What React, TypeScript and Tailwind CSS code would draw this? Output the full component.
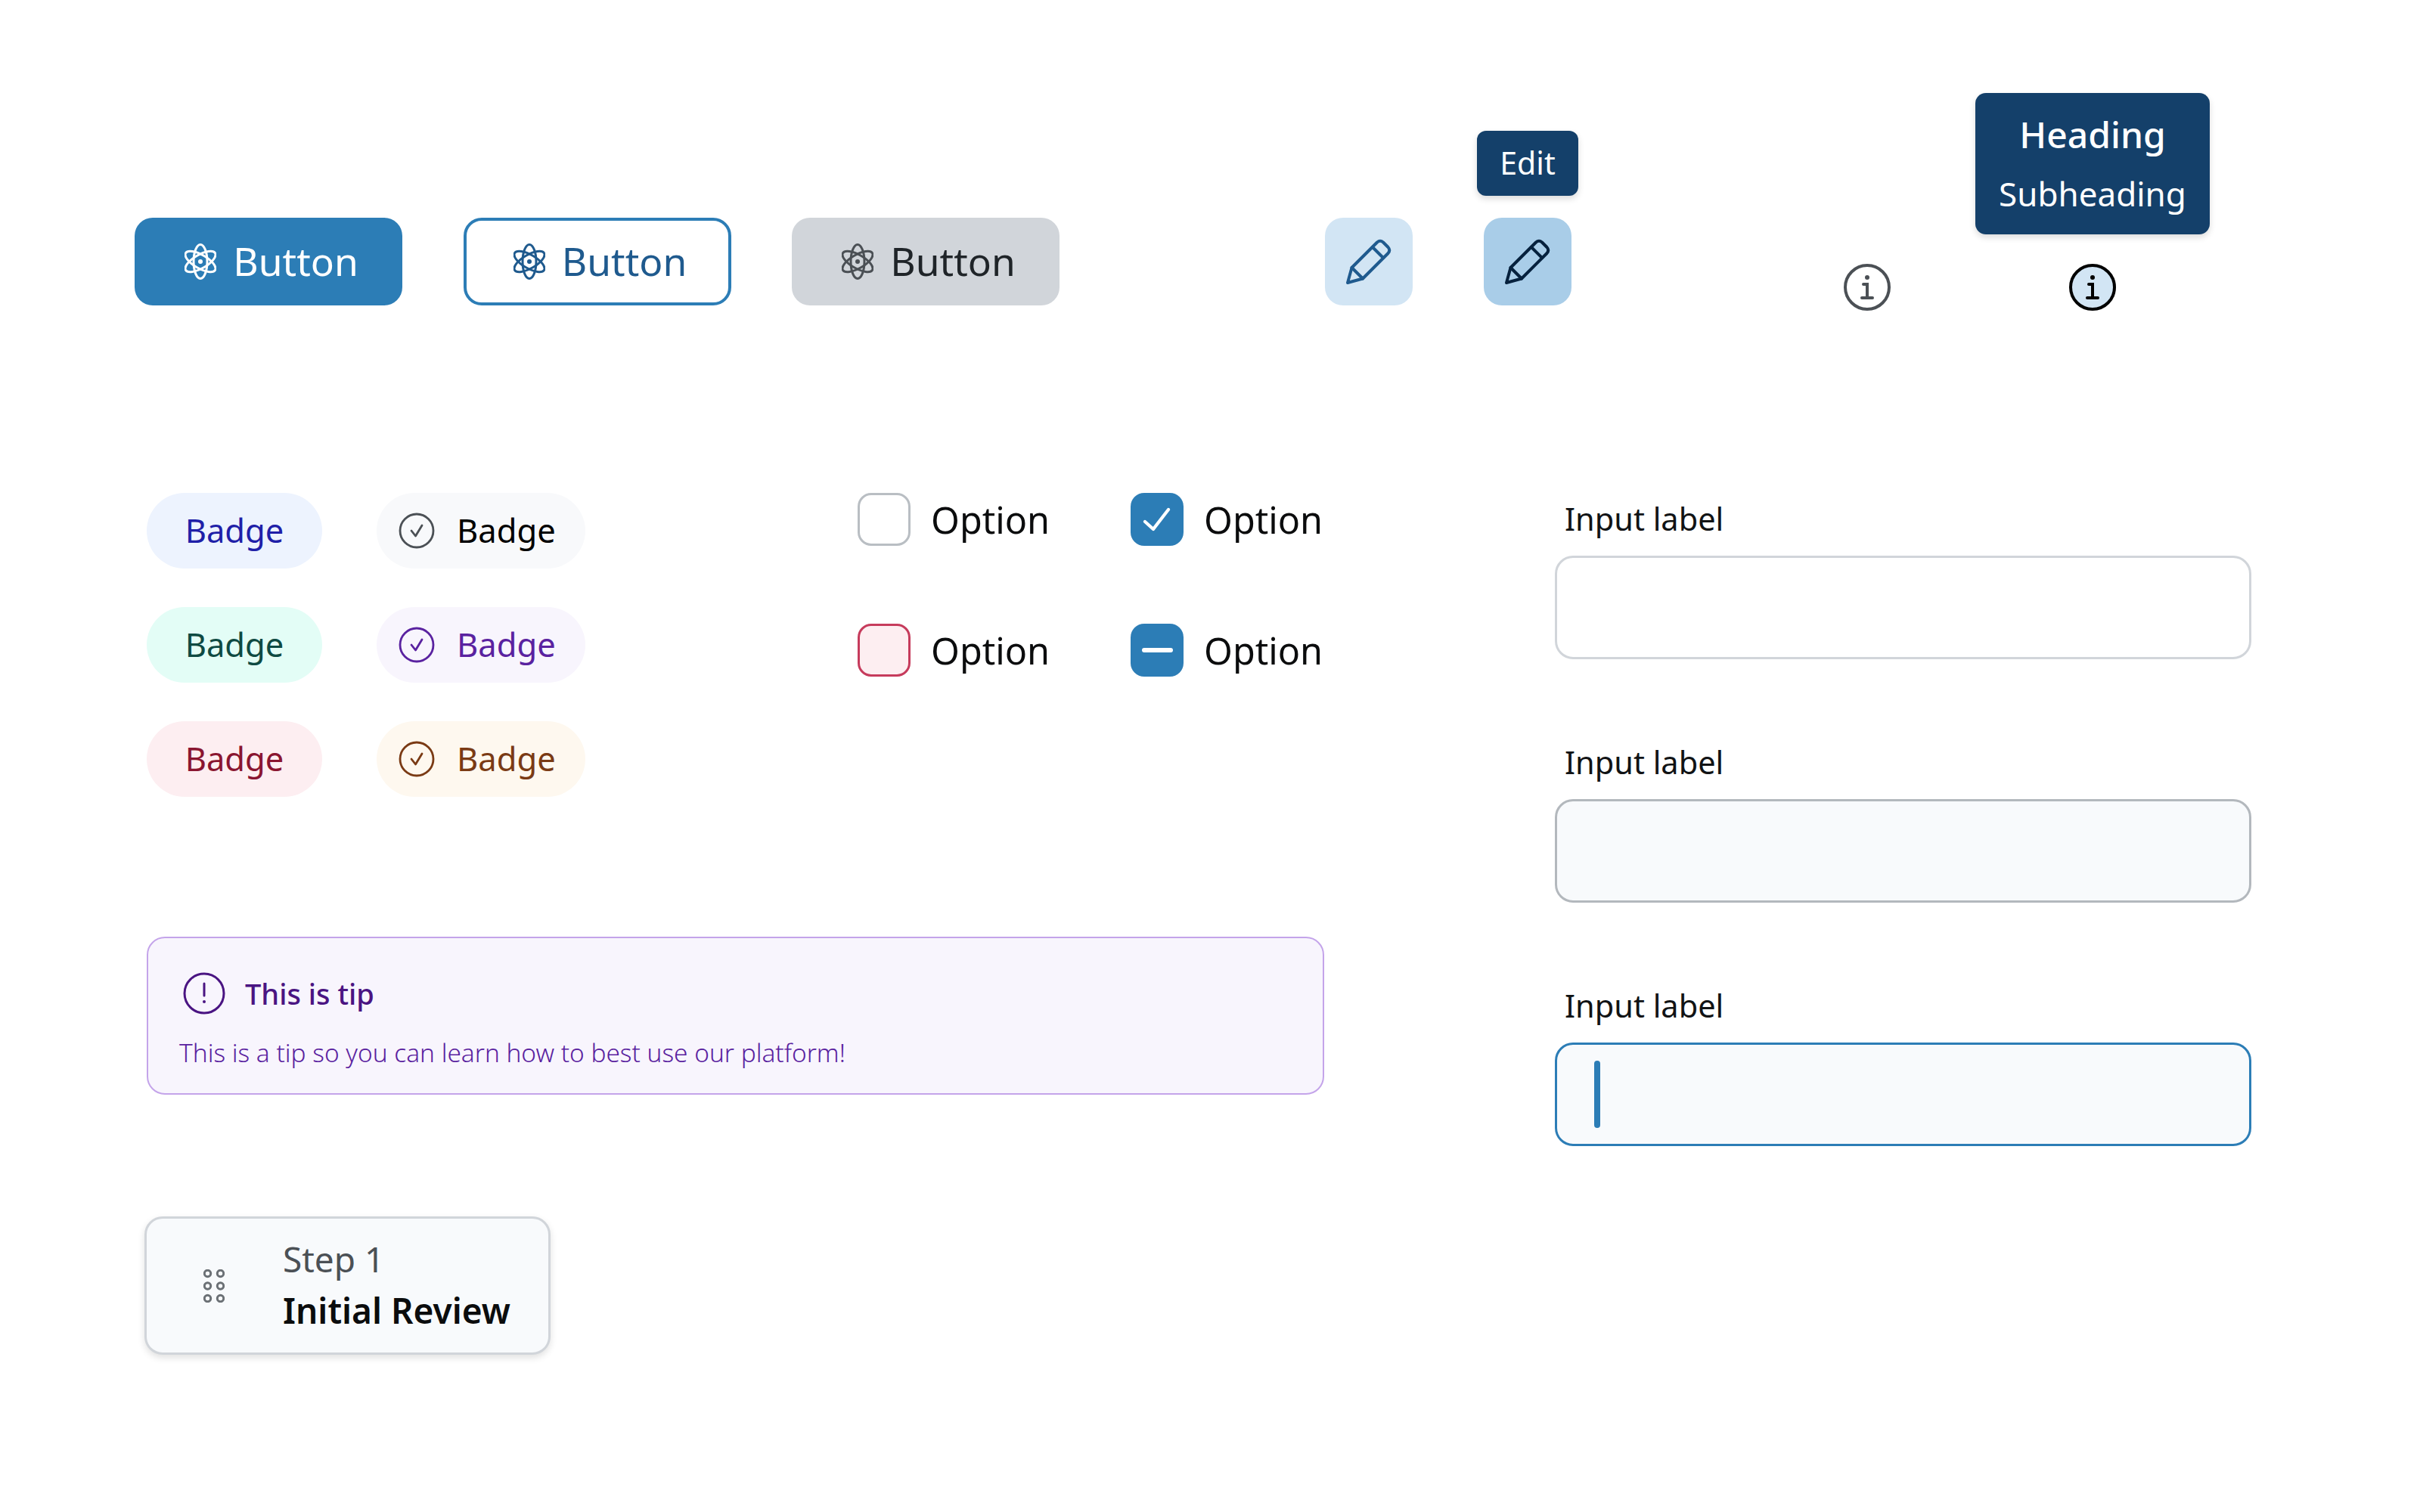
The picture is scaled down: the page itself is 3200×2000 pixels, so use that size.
import React from 'react';

const AtomIcon: React.FC<{ className: string }> = ({ className }) => (
  <svg viewBox="0 0 42 48" className={`w-[42px] h-[48px] shrink-0 ${className}`} fill="none" stroke="currentColor" strokeWidth="3">
    <ellipse cx="21" cy="24" rx="9" ry="22.5" />
    <ellipse cx="21" cy="24" rx="9" ry="22.5" transform="rotate(60 21 24)" />
    <ellipse cx="21" cy="24" rx="9" ry="22.5" transform="rotate(-60 21 24)" />
    <circle cx="21" cy="24" r="3" fill="currentColor" stroke="none" />
  </svg>
);

const PencilIcon: React.FC<{ className: string }> = ({ className }) => (
  <svg viewBox="0 0 60 60" className={`w-[60px] h-[60px] ${className}`} fill="none" stroke="currentColor" strokeWidth="4" strokeLinejoin="round" strokeLinecap="round">
    <path d="M2 58 L7.5 38 L41 4.5 Q45 1 49 4.5 L55.5 11 Q59 15 55.5 19 L22 52.5 Z" />
    <path d="M7.5 38 L22 52.5" />
    <path d="M35 11 L49 25" />
  </svg>
);

const InfoIcon: React.FC<{ className: string }> = ({ className }) => (
  <svg viewBox="0 0 62 62" className={`w-[62px] h-[62px] ${className}`} fill="none" stroke="currentColor" strokeWidth="4" strokeLinecap="round">
    <circle cx="31" cy="31" r="29" fill="var(--fill)" />
    <circle cx="31" cy="18" r="3" fill="currentColor" stroke="none" />
    <path d="M26 27 H31 V45" />
    <path d="M24 45 H38" />
  </svg>
);

const CheckRing: React.FC<{ className: string }> = ({ className }) => (
  <svg viewBox="0 0 48 48" className={`w-[48px] h-[48px] shrink-0 ${className}`} fill="none" stroke="currentColor" strokeWidth="2.8" strokeLinecap="round" strokeLinejoin="round">
    <circle cx="24" cy="24" r="22" />
    <path d="M17 24 L22.5 31 L31 17" />
  </svg>
);

const Btn: React.FC<{ box: string; icon: string }> = ({ box, icon }) => (
  <button className={`w-[354px] h-[116px] mb-[7px] pl-[8px] rounded-[24px] flex items-center justify-center gap-[22px] text-[51.5px] leading-none ${box}`}>
    <AtomIcon className={icon} />
    <span>Button</span>
  </button>
);

const Badge: React.FC<{ box: string; icon?: string }> = ({ box, icon }) => (
  <div className={`h-[100px] pb-[1px] rounded-full flex items-center text-[43.5px] ${icon ? 'pl-[29px] gap-[29px]' : 'justify-center'} ${box}`}>
    {icon && <CheckRing className={icon} />}
    <span>Badge</span>
  </div>
);

const Check: React.FC<{ box: string; children?: React.ReactNode }> = ({ box, children }) => (
  <div className="flex items-center gap-[27px] h-[70px] text-[48.5px] text-[#0b0c0d]">
    <div className={`w-[70px] h-[70px] rounded-[18px] flex items-center justify-center ${box}`}>{children}</div>
    <span>Option</span>
  </div>
);

const Field: React.FC<{ box: string; children?: React.ReactNode }> = ({ box, children }) => (
  <div className="flex flex-col">
    <label className="pl-[13px] h-[77px] text-[41.5px] leading-[56px] text-[#111315]">Input label</label>
    <div className={`w-[921px] h-[137px] rounded-[24px] flex items-center pl-[49px] ${box}`}>{children}</div>
  </div>
);

export default function App() {
  return (
    <div className="w-[3200px] h-[2000px] bg-white pt-[123px] font-['Noto_Sans',sans-serif] overflow-hidden">
      <div className="flex items-end pl-[178px] h-[288px]">
        <div className="flex gap-[80.5px]">
          <Btn box="bg-[#2c7db6] text-white" icon="text-white" />
          <Btn box="bg-white border-[4px] border-[#2c7db6] text-[#1f5a8e]" icon="text-[#1f5a8e]" />
          <Btn box="bg-[#d1d5da] text-[#1f2428]" icon="text-[#4b5055]" />
        </div>
        <button className="ml-[351px] mb-[7px] w-[116px] h-[116px] rounded-[24px] bg-[#d2e5f4] flex items-center justify-center">
          <PencilIcon className="text-[#1f5a8e]" />
        </button>
        <div className="ml-[85px] w-[134px] flex flex-col items-center mb-[7px]">
          <div className="w-[134px] h-[86px] rounded-[12px] bg-[#14406a] text-white text-[41px] flex items-center justify-center shadow-[0_4px_8px_rgba(0,0,0,0.14)]">Edit</div>
          <button className="mt-[29px] w-[116px] h-[116px] rounded-[24px] bg-[#a9cde8] flex items-center justify-center">
            <PencilIcon className="text-[#06213d]" />
          </button>
        </div>
        <InfoIcon className="ml-[351px] text-[#4b5055] [--fill:#ffffff]" />
        <div className="ml-[112px] w-[310px] flex flex-col items-center">
          <div className="w-[310px] h-[187px] rounded-[14px] bg-[#14406a] text-white flex flex-col items-center justify-center shadow-[0_4px_8px_rgba(0,0,0,0.14)]">
            <span className="text-[48px] font-medium leading-[62px] -mt-[2px]">Heading</span>
            <span className="text-[44px] leading-[58px] mt-[18px]">Subheading</span>
          </div>
          <InfoIcon className="mt-[39px] text-black [--fill:#d2e5f4]" />
        </div>
      </div>

      <div className="flex pl-[191px] mt-[241px]">
        <div className="w-[1865px] flex flex-col">
          <div className="flex pl-[3px]">
            <div className="grid grid-cols-[232px_276px] gap-x-[72px] gap-y-[51px] w-[940px]">
              <Badge box="bg-[#edf3fe] text-[#1f1fa8]" />
              <Badge box="bg-[#f8f9fb] text-black" icon="text-[#4b5055]" />
              <Badge box="bg-[#e3fdf6] text-[#0e4a42]" />
              <Badge box="bg-[#f8f5fd] text-[#5a22a0]" icon="text-[#5a22a0]" />
              <Badge box="bg-[#fdeef1] text-[#8a1530]" />
              <Badge box="bg-[#fef8ef] text-[#7a3a14]" icon="text-[#7a3a14]" />
            </div>
            <div className="grid grid-cols-[361px_260px] gap-y-[103px] content-start">
              <Check box="bg-white border-[3px] border-[#b9bec3]" />
              <Check box="bg-[#2c7db6]">
                <svg viewBox="0 0 70 70" className="w-[70px] h-[70px]" fill="none" stroke="white" strokeWidth="4.2" strokeLinecap="round" strokeLinejoin="round">
                  <path d="M19 38 L30 48 L50 22" />
                </svg>
              </Check>
              <Check box="bg-[#fdeef1] border-[3px] border-[#c63b5c]" />
              <Check box="bg-[#2c7db6]">
                <div className="w-[41px] h-[6px] rounded-full bg-white" />
              </Check>
            </div>
          </div>

          <div className="mt-[185px] ml-[3px] w-[1557px] h-[209px] rounded-[24px] border-2 border-[#c4a4ea] bg-[#f8f5fd] pl-[46px] flex flex-col">
            <div className="flex items-center gap-[26px] mt-[45px] text-[#4a1482]">
              <svg viewBox="0 0 56 56" className="w-[56px] h-[56px]" fill="none" stroke="currentColor" strokeWidth="3" strokeLinecap="round">
                <circle cx="28" cy="28" r="26" />
                <path d="M28 15 V31" />
                <circle cx="28" cy="39" r="2" fill="currentColor" stroke="none" />
              </svg>
              <span className="text-[38px] font-[550] leading-[56px]">This is tip</span>
            </div>
            <p className="-ml-[5px] mt-[26px] text-[33.4px] font-light leading-[48px] text-[#5a22a0]">This is a tip so you can learn how to best use our platform!</p>
          </div>

          <div className="mt-[161px] w-[537px] h-[183px] rounded-[24px] border-[3px] border-[#d1d5da] bg-[#f8fafc] shadow-[0_4px_10px_rgba(0,0,0,0.12)] flex items-center pl-[75px] gap-[77px]">
            <svg viewBox="0 0 28 44" className="w-[28px] h-[44px] shrink-0" fill="none" stroke="#6b7075" strokeWidth="3">
              <circle cx="5.5" cy="5.5" r="4.2" />
              <circle cx="22.5" cy="5.5" r="4.2" />
              <circle cx="5.5" cy="22" r="4.2" />
              <circle cx="22.5" cy="22" r="4.2" />
              <circle cx="5.5" cy="38.5" r="4.2" />
              <circle cx="22.5" cy="38.5" r="4.2" />
            </svg>
            <div className="flex flex-col">
              <span className="text-[46px] leading-[68px] -mt-[4px] text-[#4b5055]">Step 1</span>
              <span className="text-[46px] leading-[68px] font-semibold text-[#0b0c0d] whitespace-nowrap">Initial Review</span>
            </div>
          </div>
        </div>

        <div className="flex flex-col gap-[108px] mt-[6px]">
          <Field box="bg-white border-[3px] border-[#d1d5da]" />
          <Field box="bg-[#f8fafc] border-[3px] border-[#b3b8bd]" />
          <Field box="bg-[#f8fafc] border-[3px] border-[#2c7db6]">
            <div className="w-[8px] h-[89px] rounded-full bg-[#2c7db6]" />
          </Field>
        </div>
      </div>
    </div>
  );
}
